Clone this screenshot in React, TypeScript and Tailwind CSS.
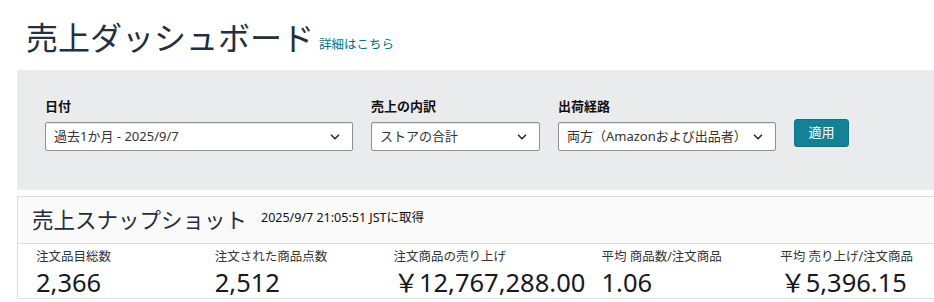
import { ChevronDown } from 'lucide-react';

const font = { fontFamily: '"Noto Sans", "Noto Sans CJK JP", sans-serif' };

const Select = ({ value, width }: { value: string; width: string }) => (
  <div
    className={`${width} h-[29px] flex items-center justify-between bg-white border border-[#8d9096] rounded-[2px] pl-[8px] pr-[10px] shadow-[inset_0_1px_0_rgba(15,17,17,0.08)]`}
  >
    <span className="text-[13px] text-[#333] whitespace-nowrap">{value}</span>
    <ChevronDown className="h-[14px] w-[14px] text-[#333]" strokeWidth={3} />
  </div>
);

const Filter = ({ label, value, width }: { label: string; value: string; width: string }) => (
  <div className="flex flex-col">
    <label className="text-[13px] font-bold text-[#111] leading-[18px] mb-[7px]">{label}</label>
    <Select value={value} width={width} />
  </div>
);

const metrics = [
  { label: '注文品目総数', value: '2,366', width: 'w-[183px]' },
  { label: '注文された商品点数', value: '2,512', width: 'w-[183px]' },
  { label: '注文商品の売り上げ', value: '￥12,767,288.00', width: 'w-[213px]' },
  { label: '平均 商品数/注文商品', value: '1.06', width: 'w-[183px]' },
  { label: '平均 売り上げ/注文商品', value: '￥5,396.15', width: 'w-[180px]' },
];

const App = () => {
  return (
    <div className="bg-white w-[934px] h-[302px] overflow-hidden pl-[17px]" style={font}>
      <div className="flex items-end pl-[9px] pt-[14px] h-[70px] pb-[12px]">
        <h1 className="text-[32px] leading-[40px] text-[#232f3e]">売上ダッシュボード</h1>
        <a className="text-[12.5px] text-[#007185] ml-[5px] mb-[5px] leading-[16px]">詳細はこちら</a>
      </div>

      <div className="bg-[#eaebed] h-[120px] w-[940px] pl-[28px] pt-[27px]">
        <div className="flex items-end gap-[18px]">
          <Filter label="日付" value="過去1か月 - 2025/9/7" width="w-[308px]" />
          <Filter label="売上の内訳" value="ストアの合計" width="w-[169px]" />
          <Filter label="出荷経路" value="両方（Amazonおよび出品者）" width="w-[218px]" />
          <button className="h-[28px] w-[55px] mb-[4px] bg-[#138296] border border-[#0f7285] rounded-[3px] text-white text-[13px]">
            適用
          </button>
        </div>
      </div>

      <div className="mt-[6px] border border-[#dddddd] w-[940px]">
        <div className="bg-[#fafafa] h-[47px] border-b border-[#dddddd] flex items-center pl-[14px]">
          <h2 className="text-[21.5px] text-[#232f3e] leading-[28px]">売上スナップショット</h2>
          <span className="text-[12.5px] text-[#111] ml-[14px] mb-[3px]">2025/9/7 21:05:51 JSTに取得</span>
        </div>
        <div className="flex pl-[18px] pt-[4px]">
          {metrics.map((m) => (
            <div key={m.label} className={`${m.width} flex flex-col`}>
              <span className="text-[12.5px] text-[#333] leading-[18px]">{m.label}</span>
              <span className="text-[25.5px] text-[#16191f] leading-[32px] whitespace-nowrap">{m.value}</span>
            </div>
          ))}
        </div>
      </div>
    </div>
  );
};

export default App;
